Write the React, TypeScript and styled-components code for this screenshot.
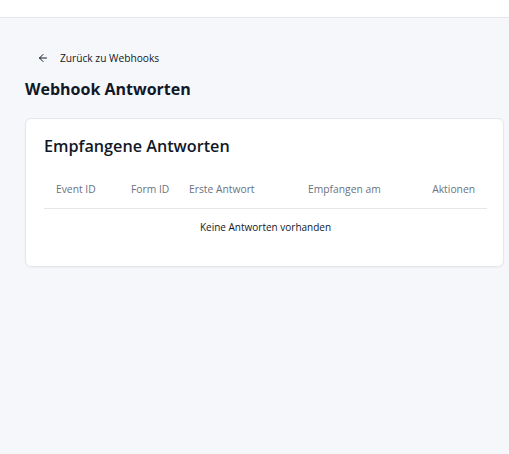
import React from "react";
import styled, { createGlobalStyle } from "styled-components";
import { ArrowLeft } from "lucide-react";

const Global = createGlobalStyle`
  html, body { margin: 0; padding: 0; }
  body {
    background: #f6f7fb;
    font-family: "Open Sans", "Noto Sans", Arial, sans-serif;
    color: #111827;
  }
`;

const Page = styled.div`
  min-height: 454px;
  background: #f6f7fb;
`;

const TopBar = styled.header`
  height: 17px;
  background: #ffffff;
  border-bottom: 1px solid #e5e7eb;
`;

const Main = styled.main`
  padding: 29px 5px 0 25px;
`;

const BackLink = styled.a`
  display: inline-flex;
  align-items: center;
  gap: 11px;
  margin-left: 12px;
  font-size: 10.2px;
  color: #111827;
  text-decoration: none;
  height: 14px;
`;

const Title = styled.h1`
  margin: 9px 0 0;
  font-size: 16px;
  font-weight: 700;
  line-height: 22px;
`;

const Card = styled.section`
  margin-top: 18px;
  background: #ffffff;
  border: 1px solid #e5e7eb;
  border-radius: 6px;
  padding: 14px 18px 22px;
  box-shadow: 0 1px 2px rgba(0, 0, 0, 0.04);
`;

const CardTitle = styled.h2`
  margin: 0;
  font-size: 16.2px;
  font-weight: 600;
  line-height: 26px;
`;

const Table = styled.table`
  width: 100%;
  margin-top: 17px;
  border-collapse: collapse;
  table-layout: fixed;
  font-size: 10.3px;
`;

const Col = styled.col<{ $w: number }>`
  width: ${(p) => p.$w}px;
`;

const Th = styled.th<{ $align?: string }>`
  text-align: ${(p) => p.$align || "left"};
  font-weight: 400;
  color: #6b7280;
  padding: 6px 12px 12px;
  border-bottom: 1px solid #e5e7eb;
  white-space: nowrap;
`;

const EmptyCell = styled.td`
  text-align: center;
  padding: 11px 0 10px;
  color: #111827;
  font-size: 10px;
`;

export default function App() {
  return (
    <Page>
      <Global />
      <TopBar />
      <Main>
        <BackLink href="#">
          <ArrowLeft size={12} strokeWidth={2} />
          <span>Zurück zu Webhooks</span>
        </BackLink>
        <Title>Webhook Antworten</Title>
        <Card>
          <CardTitle>Empfangene Antworten</CardTitle>
          <Table>
            <colgroup>
              <Col $w={75} />
              <Col $w={58} />
              <Col $w={119} />
              <Col $w={123} />
              <Col $w={68} />
            </colgroup>
            <thead>
              <tr>
                <Th>Event ID</Th>
                <Th>Form ID</Th>
                <Th>Erste Antwort</Th>
                <Th>Empfangen am</Th>
                <Th $align="right">Aktionen</Th>
              </tr>
            </thead>
            <tbody>
              <tr>
                <EmptyCell colSpan={5}>Keine Antworten vorhanden</EmptyCell>
              </tr>
            </tbody>
          </Table>
        </Card>
      </Main>
    </Page>
  );
}
